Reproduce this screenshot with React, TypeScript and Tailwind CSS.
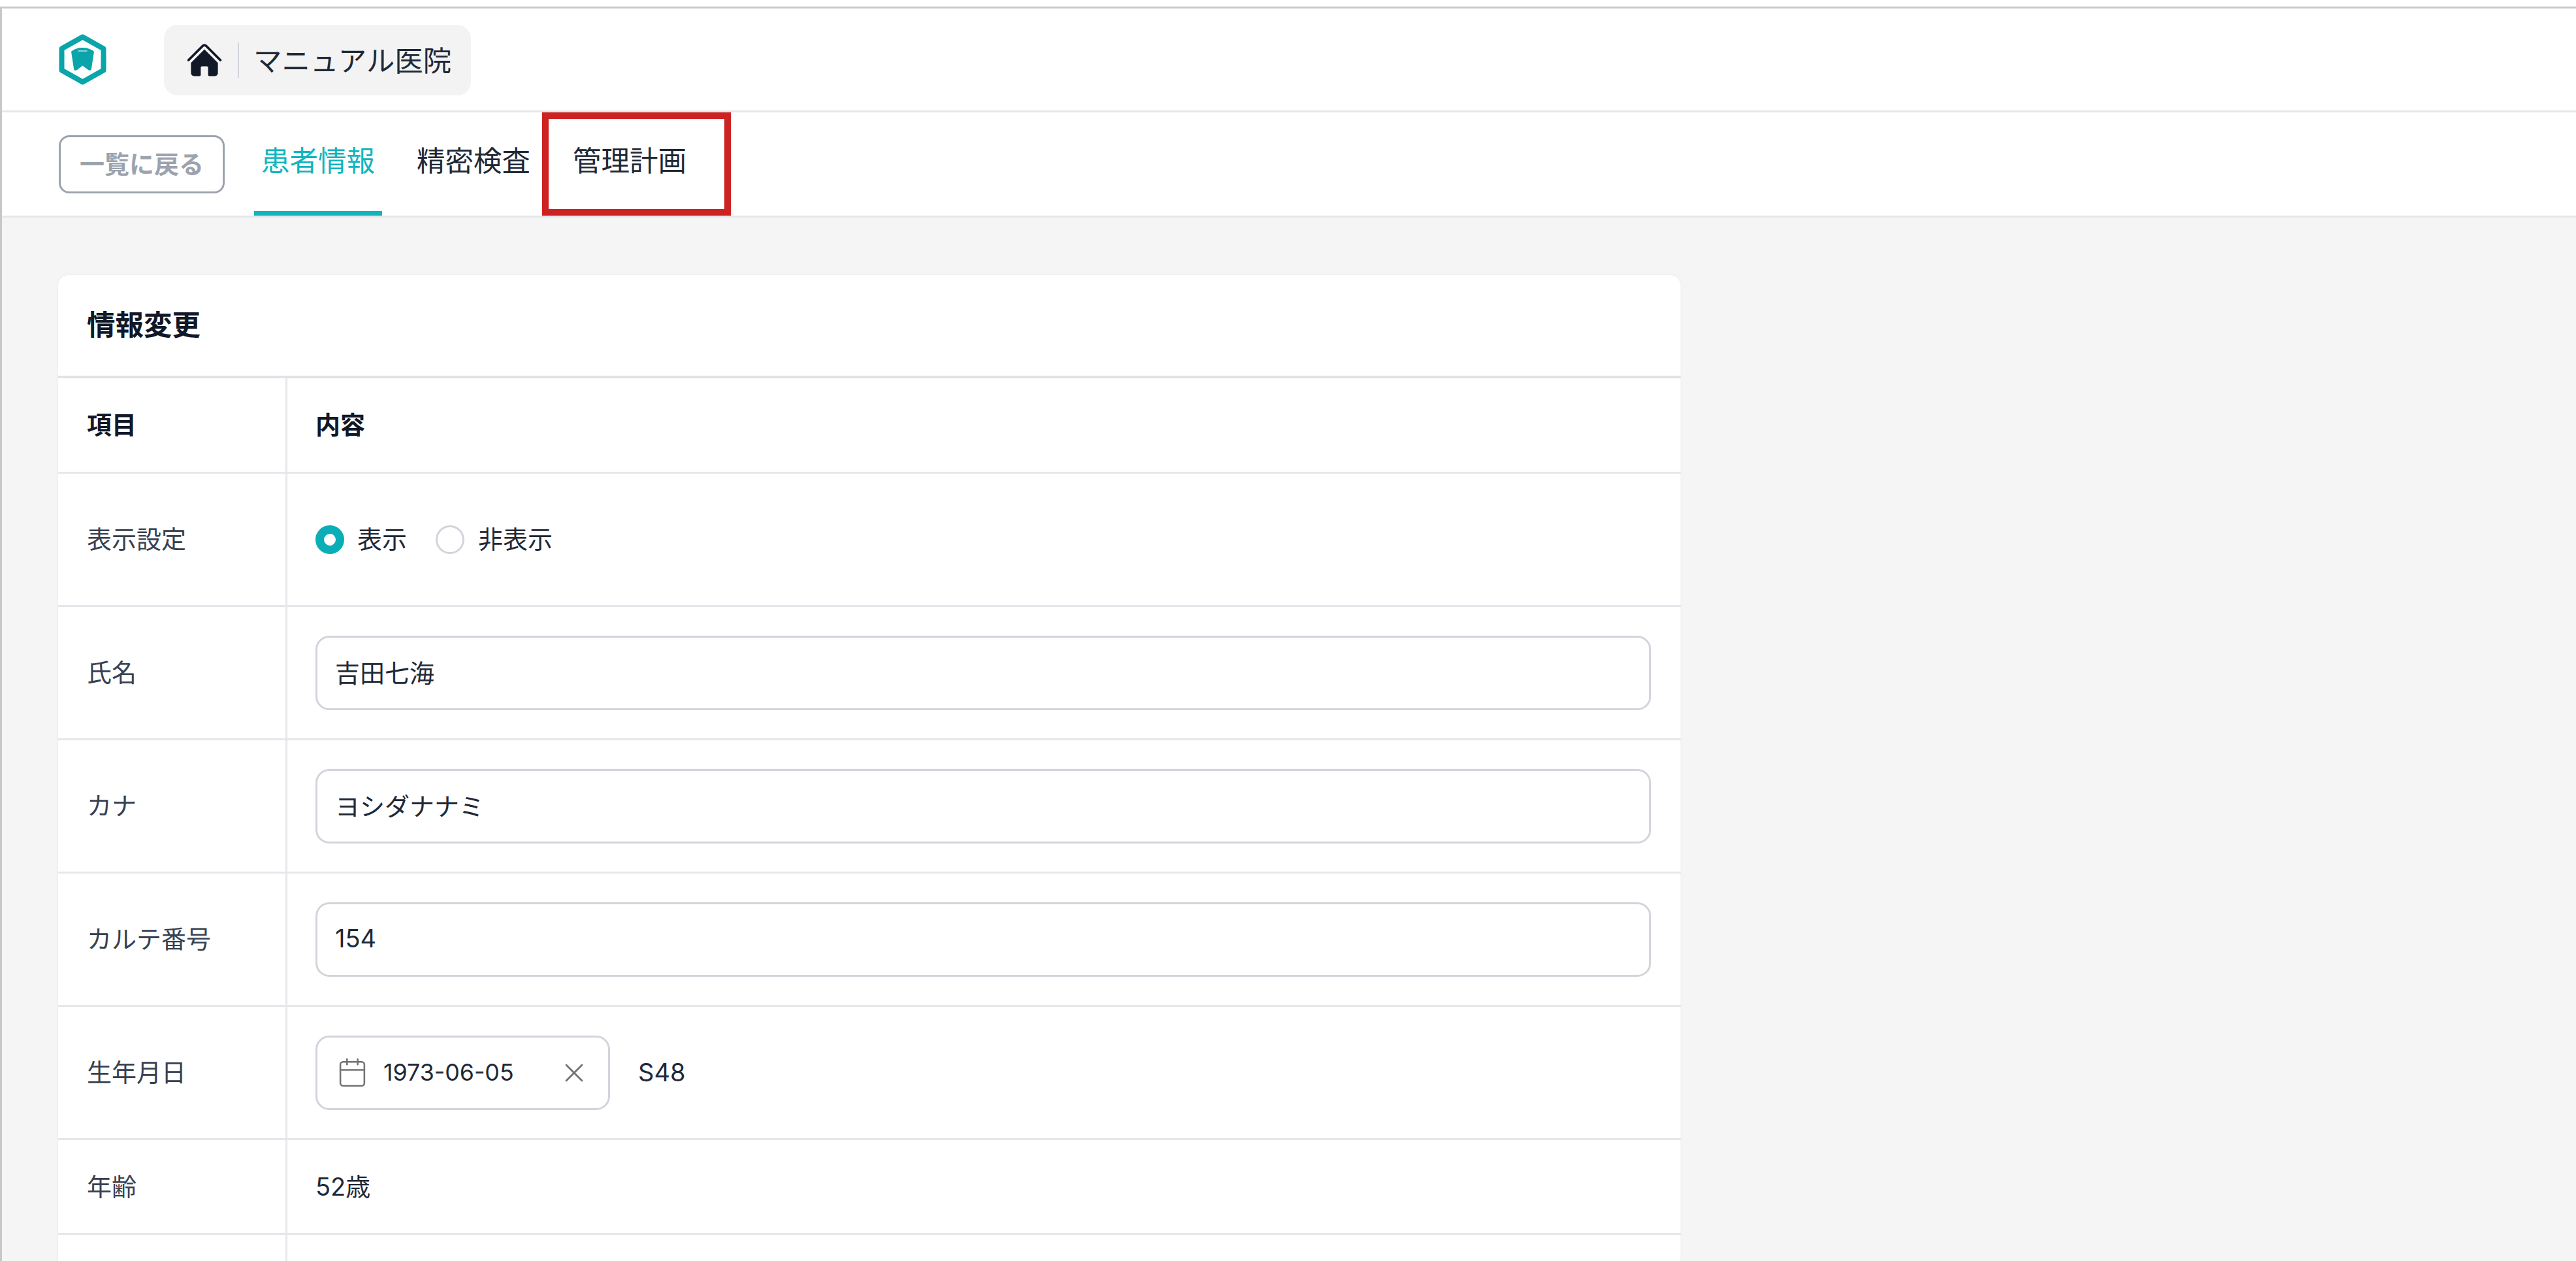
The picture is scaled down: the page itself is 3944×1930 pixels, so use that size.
import React from "react";
import { Calendar, X } from "lucide-react";

function Row({ label, h, children, bold }: { label: string; h: string; children?: React.ReactNode; bold?: boolean }) {
  return (
    <div className={`flex border-b-[3px] border-[#e5e7eb] ${h}`}>
      <div className={`w-[351px] shrink-0 border-r-[3px] border-[#e5e7eb] pl-[44px] flex items-center ${bold ? "font-bold text-[#111827]" : "text-[#374151]"}`}>
        {label}
      </div>
      <div className={`flex-1 pl-[43px] pr-[45px] flex items-center ${bold ? "font-bold text-[#111827]" : "text-[#1f2937]"}`}>
        {children}
      </div>
    </div>
  );
}

function Field({ value }: { value: string }) {
  return (
    <input
      readOnly
      defaultValue={value}
      className="w-full h-[114px] rounded-[21px] border-[3px] border-[#d1d5db] bg-white px-[27px] pb-[4px] text-[38px] text-[#1f2937] outline-none"
    />
  );
}

export default function App() {
  return (
    <div className="h-[1930px] overflow-hidden bg-white pt-[10px] font-[Inter,'Noto_Sans_CJK_JP',sans-serif]">
      <div className="h-[1920px] border-t-[3px] border-l-[3px] border-[#c8c8c8] bg-[#f5f5f5]">
        <header className="h-[159px] bg-white border-b-[3px] border-[#e5e7eb] flex items-center pl-[87px]">
          <svg width="73" height="78" viewBox="0 0 73 78" className="shrink-0">
            <path d="M36.5 4.5 L68.5 22.5 V55.5 L36.5 73.5 L4.5 55.5 V22.5 Z" fill="none" stroke="#09a5aa" strokeWidth="8" strokeLinejoin="round" />
            <path d="M19 27 C25 22 31 21 36.5 21 C42 21 48 22 54 27 L50 53 C50 56 47 56.5 45 55 L36.5 48.5 L28 55 C26 56.5 23 56 23 53 Z" fill="#09a5aa" />
            <path d="M30 26 H43" stroke="#ffffff" strokeWidth="1.5" strokeLinecap="round" opacity="0.7" />
          </svg>
          <div className="ml-[88px] mt-[2px] h-[108px] rounded-[21px] bg-[#f3f3f3] flex items-center pl-[32px] pr-[30px]">
            <svg width="60" height="60" viewBox="0 0 24 24" fill="#111827" className="shrink-0">
              <path d="M11.47 3.841a.75.75 0 0 1 1.06 0l8.69 8.69a.75.75 0 1 0 1.06-1.061l-8.689-8.69a2.25 2.25 0 0 0-3.182 0l-8.69 8.69a.75.75 0 1 0 1.061 1.06l8.69-8.689Z" />
              <path d="m12 5.432 8.159 8.159c.03.03.06.058.091.086v6.198c0 1.035-.84 1.875-1.875 1.875H15a.75.75 0 0 1-.75-.75v-4.5a.75.75 0 0 0-.75-.75h-3a.75.75 0 0 0-.75.75V21a.75.75 0 0 1-.75.75H5.625a1.875 1.875 0 0 1-1.875-1.875v-6.198a2.29 2.29 0 0 0 .091-.086L12 5.432Z" />
            </svg>
            <div className="ml-[21px] w-[2px] h-[54px] bg-[#d1d5db]" />
            <span className="ml-[22px] pt-[3px] text-[43.5px] text-[#1f2937] whitespace-nowrap">マニュアル医院</span>
          </div>
        </header>

        <nav className="relative h-[161px] bg-white border-b-[3px] border-[#e5e7eb] flex items-stretch pl-[87px]">
          <div className="flex items-center">
            <button className="w-[254px] h-[89px] rounded-[16px] border-[3px] border-[#9ca3af] text-[38px] font-bold text-[#9ca3af] whitespace-nowrap">
              一覧に戻る
            </button>
          </div>
          <div className="ml-[45px] flex gap-[42px] text-[43.5px]">
            <div className="w-[196px] flex items-center justify-center pb-[2px] border-b-[7px] border-[#12b5bd] text-[#12b5bd] whitespace-nowrap">患者情報</div>
            <div className="w-[196px] flex items-center justify-center pb-[2px] border-b-[7px] border-transparent text-[#1f2937] whitespace-nowrap">精密検査</div>
            <div className="w-[196px] pl-[2px] flex items-center justify-center pb-[2px] border-b-[7px] border-transparent text-[#1f2937] whitespace-nowrap">管理計画</div>
          </div>
          <div className="absolute left-[827px] top-0 w-[289px] h-[158px] border-[10px] border-[#cc2222]" />
        </nav>

        <section className="mt-[88px] ml-[86px] w-[2484px] bg-white rounded-[16px] shadow-[0_0_4px_rgba(0,0,0,0.06)] text-[38px]">
          <div className="h-[158px] border-b-[4px] border-[#e1e3e9] pl-[44px] flex items-center text-[43.5px] font-bold text-[#111827]">情報変更</div>
          <Row label="項目" h="h-[146px]" bold>内容</Row>
          <Row label="表示設定" h="h-[204px]">
            <div className="flex items-center">
              <span className="w-[44px] h-[44px] rounded-full border-[13px] border-[#09aeb6] bg-white" />
              <span className="ml-[20px]">表示</span>
              <span className="ml-[44px] w-[44px] h-[44px] rounded-full border-[3px] border-[#d1d5db] bg-white" />
              <span className="ml-[21px]">非表示</span>
            </div>
          </Row>
          <Row label="氏名" h="h-[204px]"><Field value="吉田七海" /></Row>
          <Row label="カナ" h="h-[204px]"><Field value="ヨシダナナミ" /></Row>
          <Row label="カルテ番号" h="h-[204px]"><Field value="154" /></Row>
          <Row label="生年月日" h="h-[204px]">
            <div className="w-[451px] h-[114px] rounded-[21px] border-[3px] border-[#d1d5db] flex items-center pl-[29px] pr-[34px]">
              <Calendar size={49} strokeWidth={1.25} color="#737373" className="shrink-0" />
              <span className="ml-[23px] flex-1 whitespace-nowrap text-[35.75px]">1973-06-05</span>
              <X size={48} strokeWidth={1.4} color="#737373" className="shrink-0 -mr-[6px]" />
            </div>
            <span className="ml-[43px]">S48</span>
          </Row>
          <Row label="年齢" h="h-[145px]">52歳</Row>
          <Row label="" h="h-[145px]" />
        </section>
      </div>
    </div>
  );
}
